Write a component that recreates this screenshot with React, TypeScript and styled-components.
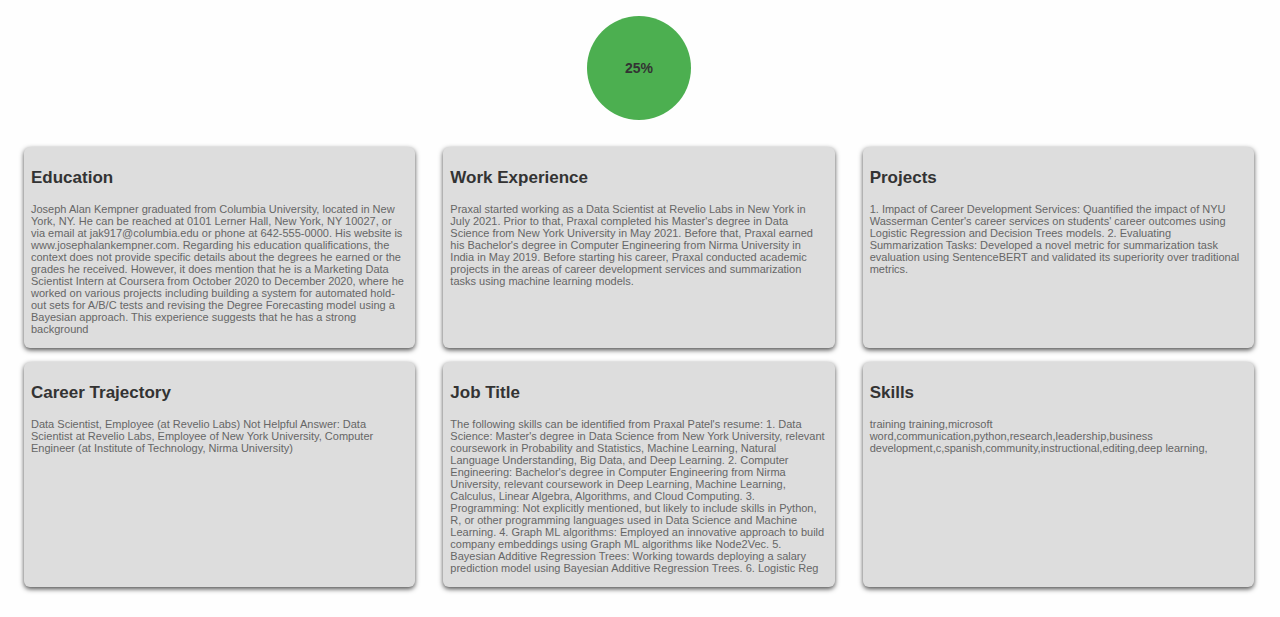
import React from "react";
import styled, { createGlobalStyle } from "styled-components";

const GlobalStyle = createGlobalStyle`
  body {
    margin: 0;
    background: #fefefe;
    font-family: "Liberation Sans", Arial, sans-serif;
  }
`;

const Page = styled.main`
  display: flex;
  flex-direction: column;
  gap: 27px;
  padding: 16px 26px 28px 24px;
`;

const Score = styled.div`
  display: flex;
  align-items: center;
  justify-content: center;
  align-self: center;
  width: 104px;
  height: 104px;
  border-radius: 50%;
  background: #4caf50;
  color: #333;
  font-size: 14px;
  font-weight: bold;
`;

const CardGrid = styled.div`
  display: grid;
  grid-template-columns: repeat(3, minmax(0, 1fr));
  gap: 14px 28px;
`;

const Card = styled.section`
  padding: 21px 9px 13px 7px;
  border-radius: 6px;
  background: #ddd;
  box-shadow: 0 2px 5px rgba(0, 0, 0, 0.7);
`;

const CardTitle = styled.h2`
  margin: 0 0 15px;
  color: #333;
  font-size: 17px;
  line-height: 20px;
`;

const CardText = styled.p`
  margin: 0;
  color: #666;
  font-size: 11px;
  line-height: 12px;
`;

const sections = [
  {
    title: "Education",
    text: "Joseph Alan Kempner graduated from Columbia University, located in New York, NY. He can be reached at 0101 Lerner Hall, New York, NY 10027, or via email at jak917@columbia.edu or phone at 642-555-0000. His website is www.josephalankempner.com. Regarding his education qualifications, the context does not provide specific details about the degrees he earned or the grades he received. However, it does mention that he is a Marketing Data Scientist Intern at Coursera from October 2020 to December 2020, where he worked on various projects including building a system for automated hold-out sets for A/B/C tests and revising the Degree Forecasting model using a Bayesian approach. This experience suggests that he has a strong background",
  },
  {
    title: "Work Experience",
    text: "Praxal started working as a Data Scientist at Revelio Labs in New York in July 2021. Prior to that, Praxal completed his Master's degree in Data Science from New York University in May 2021. Before that, Praxal earned his Bachelor's degree in Computer Engineering from Nirma University in India in May 2019. Before starting his career, Praxal conducted academic projects in the areas of career development services and summarization tasks using machine learning models.",
  },
  {
    title: "Projects",
    text: "1. Impact of Career Development Services: Quantified the impact of NYU Wasserman Center's career services on students' career outcomes using Logistic Regression and Decision Trees models. 2. Evaluating Summarization Tasks: Developed a novel metric for summarization task evaluation using SentenceBERT and validated its superiority over traditional metrics.",
  },
  {
    title: "Career Trajectory",
    text: "Data Scientist, Employee (at Revelio Labs) Not Helpful Answer: Data Scientist at Revelio Labs, Employee of New York University, Computer Engineer (at Institute of Technology, Nirma University)",
  },
  {
    title: "Job Title",
    text: "The following skills can be identified from Praxal Patel's resume: 1. Data Science: Master's degree in Data Science from New York University, relevant coursework in Probability and Statistics, Machine Learning, Natural Language Understanding, Big Data, and Deep Learning. 2. Computer Engineering: Bachelor's degree in Computer Engineering from Nirma University, relevant coursework in Deep Learning, Machine Learning, Calculus, Linear Algebra, Algorithms, and Cloud Computing. 3. Programming: Not explicitly mentioned, but likely to include skills in Python, R, or other programming languages used in Data Science and Machine Learning. 4. Graph ML algorithms: Employed an innovative approach to build company embeddings using Graph ML algorithms like Node2Vec. 5. Bayesian Additive Regression Trees: Working towards deploying a salary prediction model using Bayesian Additive Regression Trees. 6. Logistic Reg",
  },
  {
    title: "Skills",
    text: "training training,microsoft word,communication,python,research,leadership,business development,c,spanish,community,instructional,editing,deep learning,",
  },
];

export default function App() {
  return (
    <>
      <GlobalStyle />
      <Page>
        <Score>25%</Score>
        <CardGrid>
          {sections.map(({ title, text }) => (
            <Card key={title}>
              <CardTitle>{title}</CardTitle>
              <CardText>{text}</CardText>
            </Card>
          ))}
        </CardGrid>
      </Page>
    </>
  );
}
